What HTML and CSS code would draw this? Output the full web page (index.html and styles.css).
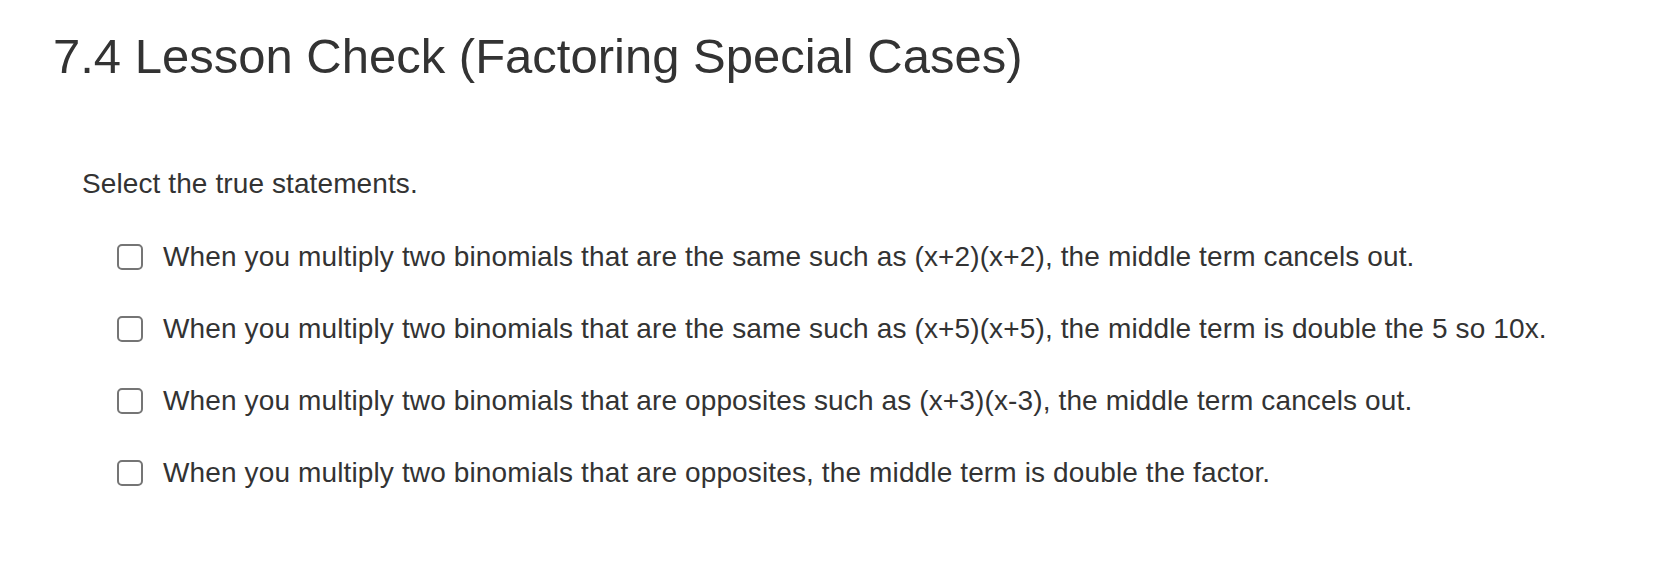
FILE: index.html
```html
<!DOCTYPE html>
<html>
<head>
<meta charset="utf-8">
<link rel="stylesheet" href="styles.css">
</head>
<body>
<div class="page">
  <h1 class="title">7.4 Lesson Check (Factoring Special Cases)</h1>
  <div class="question">
    <p class="prompt">Select the true statements.</p>
    <ul class="options">
      <li class="option"><span class="box"></span><span class="label">When you multiply two binomials that are the same such as (x+2)(x+2), the middle term cancels out.</span></li>
      <li class="option"><span class="box"></span><span class="label">When you multiply two binomials that are the same such as (x+5)(x+5), the middle term is double the 5 so 10x.</span></li>
      <li class="option"><span class="box"></span><span class="label">When you multiply two binomials that are opposites such as (x+3)(x-3), the middle term cancels out.</span></li>
      <li class="option"><span class="box"></span><span class="label">When you multiply two binomials that are opposites, the middle term is double the factor.</span></li>
    </ul>
  </div>
</div>
</body>
</html>
```
FILE: styles.css
```css
html, body {
  margin: 0;
  padding: 0;
  background: #fff;
}
body {
  font-family: "Liberation Sans", Arial, sans-serif;
  color: #333;
}
.page {
  padding: 23px 0 0 53px;
}
.title {
  margin: 0;
  font-size: 49px;
  font-weight: normal;
  line-height: 66px;
  white-space: nowrap;
}
.question {
  padding: 78px 0 0 29px;
}
.prompt {
  margin: 0;
  font-size: 28px;
  line-height: 34px;
  letter-spacing: 0.1px;
}
.options {
  list-style: none;
  margin: 0;
  padding: 39px 0 0 35px;
  display: flex;
  flex-direction: column;
  gap: 38px;
}
.option {
  display: flex;
  align-items: center;
  gap: 20px;
  font-size: 28px;
  line-height: 34px;
  letter-spacing: 0.13px;
  white-space: nowrap;
}
.box {
  box-sizing: border-box;
  width: 26px;
  height: 26px;
  border: 2px solid #757575;
  border-radius: 5px;
  flex: none;
}
```
